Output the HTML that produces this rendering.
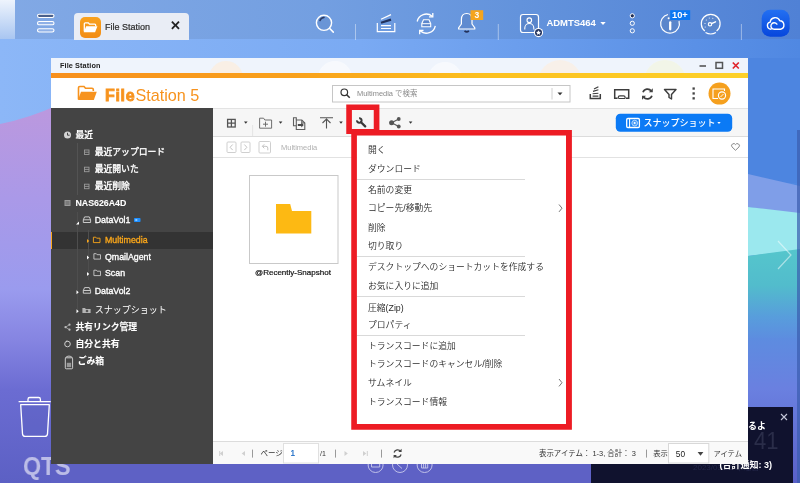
<!DOCTYPE html>
<html lang="ja"><head><meta charset="utf-8"><title>File Station</title>
<style>
*{box-sizing:border-box;margin:0;padding:0}
html,body{width:800px;height:483px;overflow:hidden}
body{position:relative;font-family:"Liberation Sans","Noto Sans CJK JP",sans-serif;background:#8ab6f7;color:#333}
.abs{position:absolute}
body>div{will-change:transform}
#desk{left:0;top:0;width:800px;height:483px}
#topbar{left:0;top:0;width:800px;height:39px;background:linear-gradient(90deg,#82a9e5 0%,#739fe1 40%,#6393dc 65%,#5081d5 100%)}
#topbar .lstrip{left:0;top:0;width:15px;height:39px;background:linear-gradient(180deg,#eef4fd,#a9c6f1)}
#tab{left:74px;top:13px;width:115px;height:27px;background:#e9edf5;border-radius:4px 4px 0 0}
#tab .ico{left:6px;top:4px;width:20.5px;height:20.5px;border-radius:5px;background:linear-gradient(180deg,#f9a21e,#f28c14)}
#tab .t{left:31px;top:7.7px;font-size:9px;color:#2c2c2c;-webkit-text-stroke:.2px #2c2c2c;white-space:nowrap;line-height:12px}
#tab .x{left:96px;top:5px;font-size:13px;font-weight:bold;color:#222;line-height:16px}
#win{left:51px;top:58px;width:697px;height:406px;background:#fff;overflow:hidden}
#titlebar{left:0;top:0;width:697px;height:15px;background:#eff4fc}
#titlebar .t{left:9px;top:3px;font-size:7.3px;font-weight:bold;color:#222;line-height:10px;white-space:nowrap;letter-spacing:.1px}
#stripe{left:0;top:15px;width:697px;height:5px;background:linear-gradient(90deg,#f7901e 0%,#f9a11b 35%,#fcc01e 62%,#fdd12a 100%)}
#header{left:0;top:20px;width:697px;height:31px;background:#fff}
#side{left:0;top:50px;width:162px;height:356px;background:#444}
#main{left:162px;top:50px;width:535px;height:356px;background:#fff}
#toolbar{left:0;top:0;width:535px;height:29px;background:#f6f6f6;border-top:1px solid #e3e3e3;border-bottom:1px solid #dcdcdc}
#navrow{left:0;top:29px;width:535px;height:21px;background:#fff;border-bottom:1px solid #e2e2e2}
#bottombar{left:0;top:333px;width:535px;height:23px;background:#f9f9f9;border-top:1px solid #dcdcdc}
.sb{position:absolute;white-space:nowrap;color:#fff;font-size:8.8px;line-height:12px;height:12px;-webkit-text-stroke:.33px currentColor}
.sb.b{font-weight:bold;-webkit-text-stroke:.1px currentColor}
#menu{left:357px;top:136px;width:210px;height:289px;background:#fff}
.mi{position:absolute;left:11px;white-space:nowrap;font-size:8.8px;line-height:12px;color:#2a2a2a;font-weight:350}
.sep{position:absolute;left:0;height:1px;width:168px;background:#d9d9d9}
.red{position:absolute;border:5.5px solid #ed1c24}
</style></head><body>
<div id="desk" class="abs">
<svg class="abs" style="left:0;top:0" width="800" height="483" viewBox="0 0 800 483">
<defs>
<linearGradient id="gb" x1="0" y1="0" x2="1" y2="0"><stop offset="0" stop-color="#8cb7f7"/><stop offset="0.45" stop-color="#7aaaf3"/><stop offset="1" stop-color="#5088e2"/></linearGradient>
<linearGradient id="gl" x1="0" y1="0" x2="0" y2="1"><stop offset="0" stop-color="#bc98de"/><stop offset="0.25" stop-color="#aa99e8"/><stop offset="0.49" stop-color="#9a9bee"/><stop offset="0.62" stop-color="#8685e2"/><stop offset="0.755" stop-color="#6b6cd2"/><stop offset="1" stop-color="#5c60c4"/></linearGradient>
<linearGradient id="gr" x1="0" y1="0" x2="0" y2="1"><stop offset="0" stop-color="#5d8ce0"/><stop offset="0.35" stop-color="#6a80e0"/><stop offset="1" stop-color="#5a60c8"/></linearGradient>
<linearGradient id="gt" x1="0" y1="0" x2="0" y2="1"><stop offset="0" stop-color="#55c6cc"/><stop offset="0.4" stop-color="#52bccc"/><stop offset="0.75" stop-color="#589ddc"/><stop offset="1" stop-color="#5d8ce0"/></linearGradient>
</defs>
<rect x="0" y="0" width="800" height="483" fill="url(#gb)"/>
<path d="M0 124 Q30 118 60 104 L60 483 L0 483Z" fill="url(#gl)"/>
<rect x="51" y="440" width="700" height="43" fill="#5e61c5"/>
<rect x="748" y="58" width="52" height="125" fill="#4d85e0"/>
<path d="M748 174 L800 186 L800 214 L748 207Z" fill="#7f9ee8"/>
<path d="M748 207 L800 213 L800 250 L748 256Z" fill="#9be8ee"/>
<path d="M748 256 L800 249 L800 340 L748 340Z" fill="url(#gt)"/>
<rect x="748" y="338" width="52" height="145" fill="url(#gr)"/>
<g fill="rgba(90,95,190,.35)" stroke="#fff" stroke-width="1.300" stroke-linejoin="round"><path d="M20.700 404.700h28.600l-1.800 29.200q-.2 2.500-2.700 2.500h-19.600q-2.500 0-2.700-2.500z"/><path d="M18.600 401.600h32.100M28 401.600v-2.300q0-1.800 1.800-1.800h8.800q1.800 0 1.800 1.800v2.300" fill="none"/></g>
<g fill="none" stroke="#fff" stroke-width="1" opacity=".6"><circle cx="375.600" cy="465" r="7.500"/><circle cx="400" cy="465" r="7.500"/><circle cx="424.600" cy="465" r="7.500"/><path d="M371.500 463.500v3.500h8.200v-3.500M397 464l5 4.500M421.500 464v4h6.200v-4M423.600 464v4M425.600 464v4"/></g>
<rect x="797" y="130" width="3" height="353" fill="#3a5cae" opacity=".7"/>
<path d="M778 241 L791 255 L778 269" fill="none" stroke="#fff" stroke-width="1.2" opacity=".5"/>
</svg>
</div>
<div class="abs" style="left:22.500px;top:451px;font-size:26px;line-height:30px;font-weight:bold;color:rgba(255,255,255,.58);white-space:nowrap;transform:scaleX(.9);transform-origin:0 0;letter-spacing:-.3px">QTS</div>
<div id="topbar" class="abs"><div class="lstrip abs"></div>
<svg class="abs" style="left:0;top:0" width="800" height="40" viewBox="0 0 800 40">
<defs><linearGradient id="gc" x1="0" y1="0" x2="0" y2="1"><stop offset="0" stop-color="#2370f2"/><stop offset="1" stop-color="#0646dc"/></linearGradient></defs>
<!-- hamburger -->
<g fill="none" stroke="#fff" stroke-width="1.100"><rect x="37.500" y="14.200" width="16.500" height="3.300" rx="1.650" fill="#4a5f8a"/><rect x="37.500" y="21.500" width="16.500" height="3.300" rx="1.650" fill="#8fb0e6"/><rect x="37.500" y="28.700" width="16.500" height="3.300" rx="1.650" fill="#8fb0e6"/></g>
<!-- search -->
<circle cx="324" cy="22.800" r="7.600" fill="#6a95d6" stroke="#fff" stroke-width="1.400"/><path d="M329.500 28.300l3.800 3.800" stroke="#fff" stroke-width="1.500" stroke-linecap="round"/><path d="M320 20.500a4.500 4.500 0 0 1 4-3" stroke="#2b3a63" stroke-width="1.500" fill="none" stroke-linecap="round"/>
<g stroke="#fff" stroke-width="1" opacity=".42"><path d="M355.500 24v16M498.300 24v16M741.400 24v16"/></g>
<!-- stack -->
<g fill="none" stroke="#fff" stroke-width="1.200"><path d="M377.300 23v8.600h17.500v-8.600"/><path d="M381 28.500h10M381 25.600h10M381 19.200l10-4.600"/></g><path d="M381 22.800l10-3.200" stroke="#22315a" stroke-width="2.200" fill="none"/>
<!-- sync -->
<g fill="none" stroke="#fff" stroke-width="1.300"><path d="M417.200 21.500a9.200 9.200 0 0 1 15-5.200"/><path d="M435.300 25.800a9.200 9.200 0 0 1-15 5.200"/><path d="M432.800 13v3.800h-3.800M419.700 34.300v-3.800h3.800"/></g>
<path d="M421.800 23.500l1.700-3.800h5.500l1.700 3.800v3.300h-8.900z" fill="#5c86cc" stroke="#fff" stroke-width="1.100"/><path d="M421.800 23.700h8.900" stroke="#fff" stroke-width="1"/>
<!-- bell -->
<path d="M466.700 13.500c-3.500 0-5.300 2.600-5.300 6v4.500l-2.800 3.800v1.200h16.200v-1.200l-2.800-3.800v-4.500c0-3.400-1.800-6-5.300-6z" fill="#5f8bd0" stroke="#fff" stroke-width="1.200" stroke-linejoin="round"/><path d="M464.500 30.800q2.200 2 4.400 0" stroke="#22315a" stroke-width="1.600" fill="none"/>
<rect x="470.500" y="10.200" width="12.700" height="9.800" fill="#f5a51e"/>
<!-- user -->
<rect x="520.500" y="14.500" width="18" height="18" rx="2.500" fill="#5a86cc" stroke="#fff" stroke-width="1.200"/>
<g fill="none" stroke="#fff" stroke-width="1.100"><circle cx="529.300" cy="20.200" r="2.300"/><path d="M524.800 29.500v-1.500a4.500 4.500 0 0 1 9 0v1.500"/></g>
<circle cx="538.500" cy="32.600" r="4.600" fill="#fff"/><circle cx="538.500" cy="32.600" r="3.500" fill="#243560"/><path d="M538.500 30.200l.75 1.600 1.700.2-1.250 1.150.35 1.700-1.550-.85-1.550.85.350-1.700-1.250-1.150 1.700-.2z" fill="#fff"/>
<path d="M600.300 22h5.400l-2.700 3z" fill="#fff"/>
<!-- three dots -->
<g stroke="#fff" stroke-width="1"><circle cx="632.300" cy="15.800" r="2.100" fill="#1f2c52"/><circle cx="632.300" cy="23.300" r="2.100" fill="#5f8bd0"/><circle cx="632.300" cy="30.800" r="2.100" fill="#5f8bd0"/></g>
<!-- info -->
<path d="M668 14.500a9.400 9.400 0 1 0 11 6.500" fill="#5a86cc" stroke="#fff" stroke-width="1.200"/>
<path d="M670.200 22.300v7" stroke="#fff" stroke-width="2.300" stroke-linecap="round"/><circle cx="668.600" cy="18.300" r="1" fill="#fff"/>
<rect x="670.200" y="10.200" width="20" height="9.800" fill="#0b78f2"/>
<!-- gauge -->
<path d="M704.800 31a9.400 9.400 0 1 1 11.800 0" fill="#5a86cc" stroke="#fff" stroke-width="1.200"/><path d="M705.500 32.500q5.200 3 10.400 0" fill="none" stroke="#fff" stroke-width="1.100"/>
<circle cx="710" cy="24.300" r="1.700" fill="none" stroke="#fff" stroke-width="1.100"/><path d="M711.500 23.600l4-1.800" stroke="#fff" stroke-width="1.400" stroke-linecap="round"/>
<g fill="#fff"><circle cx="705" cy="23.500" r=".55"/><circle cx="706.300" cy="20" r=".55"/><circle cx="709.300" cy="18" r=".55"/><circle cx="712.800" cy="18.200" r=".55"/><circle cx="705.200" cy="27" r=".55"/></g>
<!-- cloud -->
<rect x="761.700" y="9.800" width="27.900" height="27" rx="8.500" fill="url(#gc)"/>
<path d="M771 29.200a3.600 3.600 0 0 1-.8-7.100a5 5 0 0 1 9.600-1.300a4.300 4.300 0 0 1 .7 8.500h-6.300a3.300 3.300 0 1 1 2.700-5.200" fill="none" stroke="#fff" stroke-width="1.400" stroke-linecap="round" stroke-linejoin="round"/>
</svg>
<div class="abs" style="left:546.500px;top:17px;font-size:9.500px;line-height:12px;font-weight:bold;color:#fff;white-space:nowrap;letter-spacing:-.05px">ADMTS464</div>
<div class="abs" style="left:474.500px;top:9.600px;font-size:8.500px;line-height:11px;font-weight:bold;color:#fff">3</div>
<div class="abs" style="left:672px;top:9.600px;font-size:9.300px;line-height:11px;font-weight:bold;color:#fff;white-space:nowrap">10+</div>
</div>
<div id="tab" class="abs"><div class="ico abs"><svg width="20.5" height="20.5" viewBox="0 0 20.5 20.5" style="display:block"><path d="M4.300 14.500V6.800q0-1 1-1h3l1.200 1.400h5.200q1 0 1 1v1" fill="none" stroke="#fff" stroke-width="1.300"/><path d="M3.800 15.200l2.300-6h11.300l-2.300 6z" fill="#fff"/></svg></div><div class="t abs">File Station</div><div class="x abs">✕</div></div>

<div id="notif" class="abs" style="left:590.500px;top:406.600px;width:202.400px;height:77px;background:#10122e;overflow:hidden">
<div class="abs" style="left:148px;top:12.500px;font-size:9px;line-height:12px;font-weight:bold;color:#fff;white-space:nowrap">いるよ</div>
<div class="abs" style="left:162.500px;top:19.500px;font-size:24.500px;line-height:28px;color:#2a2d49;white-space:nowrap;transform:scaleX(.9);transform-origin:0 0">41</div>
<div class="abs" style="left:102px;top:55px;font-size:8px;line-height:12px;color:#24274a;white-space:nowrap">2023/03/16 木曜日</div>
<div class="abs" style="left:128.500px;top:51.500px;font-size:9px;line-height:12px;font-weight:bold;color:#fff;white-space:nowrap">(合計通知: 3)</div>
<svg class="abs" style="left:189px;top:6px" width="8" height="8" viewBox="0 0 8 8"><path d="M1 1l6 6M7 1l-6 6" stroke="#c4c6d8" stroke-width="1.100"/></svg>
</div>

<div id="win" class="abs">
 <div id="titlebar" class="abs"><div class="t abs">File Station</div>
<svg class="abs" style="left:0;top:0" width="697" height="15" viewBox="51 58 697 15">
<g opacity=".65"><circle cx="226" cy="78" r="17" fill="#fdecd8"/><circle cx="335" cy="78" r="17" fill="#fcfdff"/><circle cx="445" cy="79" r="17" fill="#fcfdff"/><circle cx="560" cy="82" r="22" fill="#fdefe0"/><circle cx="665" cy="81" r="21" fill="#f5f7de"/></g>
<path d="M699.500 66h6.500" stroke="#555" stroke-width="1.600"/>
<rect x="716" y="62.500" width="6.500" height="5.800" fill="none" stroke="#555" stroke-width="1.500"/>
<path d="M732.800 62.500l6 6M738.800 62.500l-6 6" stroke="#e0242b" stroke-width="1.700"/>
</svg></div>
 <div id="stripe" class="abs"></div>
 <div id="header" class="abs">
<svg class="abs" style="left:0;top:0" width="697" height="31" viewBox="51 78 697 31">
<!-- logo folder -->
<path d="M78.500 99.500V87.800q0-1.300 1.300-1.300h4.200l1.500 1.800h6.500q1.300 0 1.300 1.300v1.400" fill="none" stroke="#f7931e" stroke-width="1.600"/>
<path d="M78 99.900l3-8.200h15.800l-3 8.200z" fill="#f7931e"/>
<!-- search -->
<rect x="332.500" y="85.500" width="237.500" height="16.500" fill="#fff" stroke="#c6c6c6" stroke-width="1"/>
<circle cx="344.300" cy="92.300" r="3.300" fill="none" stroke="#333" stroke-width="1.200"/><path d="M346.700 94.800l3 3" stroke="#333" stroke-width="1.500"/>
<path d="M552 88v11.500" stroke="#d0d0d0" stroke-width="1"/>
<path d="M557.500 92.500h5l-2.500 2.800z" fill="#333"/>
<!-- stack icon -->
<g fill="none" stroke="#3d3d3d"><path d="M590.300 94v4.500h10v-4.500" stroke-width="1.500"/><path d="M592.600 96.100h5.800M592.600 93.700l5.800-.5M593 91.400l5.400-1.600M594 89.100l4.400-2.300" stroke-width="1.150"/></g>
<!-- device icon -->
<g fill="none" stroke="#3d3d3d" stroke-width="1.500"><path d="M617.500 98.300h-2.800v-8.600h14v8.600h-2.800"/><path d="M618.300 98.600v-1.300q0-1.500 1.500-1.500h3.800q1.500 0 1.500 1.500v1.300" stroke-width="1.200"/><path d="M618.500 98.500h6.500" stroke-width="1"/></g>
<!-- refresh -->
<g fill="none" stroke="#3d3d3d" stroke-width="1.700"><path d="M643 92.300a4.700 4.700 0 0 1 8.300-1.200"/><path d="M651.900 95.700a4.700 4.700 0 0 1-8.300 1.200"/></g>
<path d="M652.800 88.200v4h-4z M642 99.800v-4h4z" fill="#444"/>
<!-- funnel -->
<path d="M664.500 89.500h11.500l-4.500 5v4.500l-2.500-1.500v-3z" fill="none" stroke="#3d3d3d" stroke-width="1.450" stroke-linejoin="round"/>
<!-- kebab -->
<g fill="#444"><rect x="692.500" y="87.400" width="2.300" height="2.300"/><rect x="692.500" y="92.300" width="2.300" height="2.300"/><rect x="692.500" y="97.200" width="2.300" height="2.300"/></g>
<!-- orange circle -->
<circle cx="719.500" cy="93.600" r="11" fill="#f5a01e"/>
<g fill="none" stroke="#fff" stroke-width="1.100"><path d="M718 98.500h-5v-9.500h11.500v2"/><circle cx="722" cy="95.500" r="3.600"/><path d="M720.500 97l3-3" stroke-width=".9"/></g>
</svg>
<div class="abs" style="left:54px;top:6.500px;font-size:16.200px;line-height:20px;color:#f7931e;white-space:nowrap"><b style="font-size:16px;letter-spacing:.7px;-webkit-text-stroke:.8px #f7931e">File</b>Station 5</div>
<div class="abs" style="left:306px;top:10.500px;font-size:7.450px;line-height:10px;color:#8a8a8a;white-space:nowrap">Multimedia で検索</div>
</div>
 <div id="side" class="abs">
<div class="abs" style="left:0;top:124px;width:162px;height:16.5px;background:#333;border-left:1.5px solid #f9a61a"></div>
<div class="abs" style="left:26px;top:35px;width:1px;height:52px;background:#535353"></div>
<div class="abs" style="left:26px;top:104px;width:1px;height:100px;background:#4e4e4e"></div>
<div class="abs" style="left:37px;top:122px;width:1px;height:50px;background:#4e4e4e"></div>
<div class="sb b" style="left:24.5px;top:21px;color:#fff">最近</div>
<div class="sb" style="left:43.7px;top:38px;color:#fff">最近アップロード</div>
<div class="sb" style="left:43.7px;top:55.4px;color:#fff">最近開いた</div>
<div class="sb" style="left:43.7px;top:72.4px;color:#fff">最近削除</div>
<div class="sb b" style="left:24.5px;top:89px;color:#fff">NAS626A4D</div>
<div class="sb" style="left:43.7px;top:106px;color:#fff">DataVol1</div>
<div class="sb" style="left:54px;top:126px;color:#f9a61a">Multimedia</div>
<div class="sb" style="left:54px;top:142.5px;color:#fff">QmailAgent</div>
<div class="sb" style="left:54px;top:159px;color:#fff">Scan</div>
<div class="sb" style="left:43.7px;top:176.7px;color:#fff">DataVol2</div>
<div class="sb" style="left:43.7px;top:195.8px;color:#fff;-webkit-text-stroke:0;font-size:9px">スナップショット</div>
<div class="sb b" style="left:24.5px;top:213.2px;color:#fff">共有リンク管理</div>
<div class="sb b" style="left:24.5px;top:229.8px;color:#fff">自分と共有</div>
<div class="sb b" style="left:26.7px;top:246.8px;color:#fff">ごみ箱</div>
<svg class="abs" style="left:0;top:0" width="162" height="356" viewBox="0 0 162 356">
<circle cx="16.5" cy="27" r="3.5" fill="#d4d4d4"/><path d="M16.5 24.8V27.2H18.6" stroke="#444" stroke-width="1" fill="none"/>
<g fill="none" stroke="#9a9a9a" stroke-width="0.9"><rect x="33.5" y="42" width="4.5" height="4.5"/><path d="M33.5 44.2h4.5"/><rect x="33.5" y="59.2" width="4.5" height="4.5"/><path d="M33.5 61.4h4.5"/><rect x="33.5" y="76.2" width="4.5" height="4.5"/><path d="M33.5 78.4h4.5"/></g>
<rect x="13.5" y="92" width="6" height="6" fill="#9a9a9a"/><path d="M14.5 94h4M14.5 96h4" stroke="#444" stroke-width=".7"/>
<path d="M28 113.5v3h-3z" fill="#fff"/>
<path d="M32.300 111.800L33.600 108.900H38.300L39.600 111.800V114.500H32.300ZM32.300 111.800H39.600" fill="none" stroke="#d8d8d8" stroke-width=".9"/>
<rect x="83" y="110" width="6.5" height="4" rx=".8" fill="#1e8fff"/><rect x="84.3" y="111" width="2" height="2" fill="#8cc8ff"/>
<path d="M36 131l2.2 2-2.2 2z" fill="#f9a61a"/>
<path d="M42.400 134.600V129.200h2.400l.8 1H49V134.600Z" fill="none" stroke="#f9a61a" stroke-width=".9"/>
<path d="M36 147.500l2.200 2-2.200 2z" fill="#fff"/>
<path d="M42.900 151.100V145.700h2.400l.8 1H49.500V151.100Z" fill="none" stroke="#c8c8c8" stroke-width=".9"/>
<path d="M36 164l2.200 2-2.200 2z" fill="#fff"/>
<path d="M42.900 167.600V162.200h2.400l.8 1H49.500V167.600Z" fill="none" stroke="#c8c8c8" stroke-width=".9"/>
<path d="M25.500 182.200l2.200 2-2.200 2z" fill="#fff"/>
<path d="M32.300 182.500L33.600 179.600H38.300L39.600 182.500V185.200H32.300ZM32.300 182.500H39.600" fill="none" stroke="#d8d8d8" stroke-width=".9"/>
<path d="M25.500 201.300l2.200 2-2.200 2z" fill="#fff"/>
<path d="M31.400 205V200h2.600l.8 1H39.600V205Z" fill="#b4b4b4"/><circle cx="36" cy="203" r="1.300" fill="#555"/>
<g fill="#bbb"><circle cx="18.500" cy="216.700" r="1.100"/><circle cx="14.500" cy="219.200" r="1.100"/><circle cx="18.500" cy="221.700" r="1.100"/></g><path d="M18.500 216.700l-4 2.500 4 2.500" fill="none" stroke="#bbb" stroke-width=".7"/>
<circle cx="16.500" cy="236" r="2.800" fill="none" stroke="#ccc" stroke-width="1"/><path d="M15 232.500l2 .5-1.500 1.500z" fill="#ccc"/>
<g transform="translate(.8,1.300)"><g fill="none" stroke="#ddd" stroke-width="0.9"><rect x="13.500" y="248.500" width="7.300" height="11" rx="1"/><path d="M13.500 248.500q3.650-3.500 7.300 0"/></g><rect x="15" y="253.500" width="4.300" height="4.300" fill="#999"/></g>
</svg>
</div>
 <div id="main" class="abs">
  <div id="toolbar" class="abs"></div>
  <div id="navrow" class="abs"></div>
  <div id="bottombar" class="abs"></div>
<svg class="abs" style="left:0;top:0" width="535" height="356" viewBox="213 108 535 356">
<!-- toolbar icons -->
<g fill="none" stroke="#555" stroke-width="1.300"><rect x="227.600" y="119.400" width="7.600" height="7.600"/><path d="M231.400 119.400v7.600M227.600 123.200h7.600"/></g>
<g fill="#333"><path d="M244 121.500h3.600l-1.800 2.200z"/><path d="M278.800 121.500h3.600l-1.800 2.200z"/><path d="M339.200 121.500h3.600l-1.800 2.200z"/><path d="M408.800 121.500h3.600l-1.800 2.200z"/></g>
<path d="M252.600 125v11" stroke="#e4e4e4" stroke-width="1"/>
<g fill="none" stroke="#686868" stroke-width=".95"><path d="M259.600 128.200v-10h4l1.200 1.800h6.800v8.200z"/><path d="M265.500 121.700v5M263 124.200h5"/></g>
<g transform="translate(.3,.5)"><g fill="none" stroke="#5e5e5e" stroke-width="1.100"><path d="M296 119.500v-2.300h-2.800v8h2.800"/><path d="M296 119.500h5.500l3 3v6.500h-8.500z"/><path d="M301.500 119.500v3h3"/></g><path d="M297.500 123.500h3.500v-1.500l2.500 2.500-2.500 2.500v-1.500h-3.500z" fill="#4a4a4a"/></g>
<g fill="none" stroke="#555" stroke-width="1.100"><path d="M320 117.800h13M326.500 128.500v-9.500M322.500 123l4-4 4 4"/></g>
<!-- wrench -->
<g fill="none" stroke="#3a3a3a"><path d="M359.1 118.2A2.300 2.300 0 1 1 357 120.300" stroke-width="2"/><path d="M361 122.200l4.200 4.200" stroke-width="2.300" stroke-linecap="round"/></g>
<!-- share -->
<g fill="#555"><circle cx="398.750" cy="119" r="1.900"/><circle cx="391.600" cy="122.750" r="2.500"/><circle cx="398.750" cy="126.500" r="1.900"/></g><path d="M398.750 119l-7.150 3.750 7.150 3.750" fill="none" stroke="#555" stroke-width="1.100"/>
<!-- snapshot btn -->
<rect x="615.800" y="113.800" width="116.400" height="18" rx="4.500" fill="#0b7af5"/>
<g fill="none" stroke="#fff" stroke-width="1.300"><rect x="626.700" y="118.500" width="12.700" height="9" rx="1.200"/><path d="M629.600 118.500v9" stroke-width="1.100"/></g><circle cx="634.700" cy="123.100" r="2.900" fill="#4d9ff8" stroke="#cfe4fd" stroke-width=".8"/><circle cx="634.700" cy="123.100" r="1" fill="#fff"/>
<path d="M717.300 122h3.400l-1.700 2z" fill="#fff"/>
<!-- nav row -->
<g fill="none" stroke="#cfcfcf" stroke-width="1"><rect x="227" y="142" width="9" height="10.500" rx="1"/><rect x="241" y="142" width="9" height="10.500" rx="1"/><rect x="259" y="141.500" width="11.500" height="11.500" rx="1"/></g>
<g fill="none" stroke="#c4c4c4" stroke-width="1"><path d="M232.700 144.500l-2.600 2.800 2.600 2.800M244.300 144.500l2.600 2.800-2.600 2.800"/><path d="M264.300 144.300l-2 2 2 2M262.500 146.300h3.500q1.800 0 1.800 1.800v2.200"/></g>
<path d="M735.500 150.300l-3.600-3.500a2.100 2.100 0 0 1 3.600-2.200a2.100 2.100 0 0 1 3.600 2.200z" fill="none" stroke="#888" stroke-width="1"/>
<!-- thumbnail -->
<rect x="249.500" y="175.500" width="88.500" height="88" fill="#fff" stroke="#c9c9c9" stroke-width="1"/>
<path d="M276 204h14.200l1.800 7h19.300v22.600h-35.300z" fill="#fdb913"/>
<!-- bottom bar -->
<g transform="translate(0,4.6)"><g fill="#d0d0d0"><path d="M223 446.500l-3.300 2.500 3.300 2.500zM219.200 446.500h1v5h-1z"/><path d="M245 446.500l-3.300 2.500 3.300 2.500z"/><path d="M344.500 446.500l3.300 2.500-3.300 2.500z"/><path d="M363 446.500l3.300 2.500-3.300 2.500zM366.800 446.500h1v5h-1z"/></g>
<g stroke="#9a9a9a" stroke-width="1"><path d="M252.500 445v8M335.500 445v8M381.500 445v8"/><path d="M646.500 445v8" /></g>
</g>
<rect x="283.500" y="443.500" width="35" height="19.500" fill="#fff" stroke="#e0e0e0" stroke-width="1"/>
<rect x="668.500" y="443.500" width="40.300" height="19.500" fill="#fff" stroke="#d8d8d8" stroke-width="1"/>
<path d="M697.600 452.100h5.800l-2.900 3.600z" fill="#444"/>
<g transform="translate(-0.4,1.2)"><g fill="none" stroke="#444" stroke-width="1.300"><path d="M394.500 451.300a3.700 3.700 0 0 1 6.600-1.100"/><path d="M401.500 453.300a3.700 3.700 0 0 1-6.600 1.100"/></g><path d="M402 447.500v3.300h-3.300z M394 457v-3.300h3.300z" fill="#444"/>
</g>
</svg>
<div class="abs" style="left:430.500px;top:9px;font-size:9px;line-height:12px;color:#fff;white-space:nowrap;font-weight:500">スナップショット</div>
<div class="abs" style="left:68px;top:33.500px;font-size:7.500px;line-height:11px;color:#b0b0b0;white-space:nowrap">Multimedia</div>
<div class="abs" style="left:42px;top:160px;font-size:8.030px;line-height:10px;color:#111;white-space:nowrap;-webkit-text-stroke:.2px #111">@Recently-Snapshot</div>
<div class="abs" style="left:47.500px;top:339.500px;font-size:7.500px;line-height:11px;color:#333;white-space:nowrap">ページ</div>
<div class="abs" style="left:77.500px;top:340px;font-size:8.300px;line-height:11px;color:#1668c4;white-space:nowrap;-webkit-text-stroke:.2px #1668c4">1</div>
<div class="abs" style="left:107px;top:340px;font-size:7px;line-height:11px;color:#333;white-space:nowrap">/1</div>
<div class="abs" style="left:326px;top:339.500px;font-size:7.450px;line-height:11px;color:#333;white-space:nowrap">表示アイテム： 1-3, 合計： 3</div>
<div class="abs" style="left:440.200px;top:339.500px;font-size:7.300px;line-height:11px;color:#333;white-space:nowrap">表示</div>
<div class="abs" style="left:462.800px;top:340.500px;font-size:8.300px;line-height:11px;color:#222;white-space:nowrap">50</div>
<div class="abs" style="left:500.500px;top:339.500px;font-size:7.300px;line-height:11px;color:#333;white-space:nowrap">アイテム</div>

 </div>
</div>

<div id="menu" class="abs">
<div class="mi" style="top:7.5px">開く</div>
<div class="mi" style="top:26.8px">ダウンロード</div>
<div class="mi" style="top:48.4px">名前の変更</div>
<div class="mi" style="top:66.2px">コピー先/移動先</div>
<div class="mi" style="top:86.3px">削除</div>
<div class="mi" style="top:104.4px">切り取り</div>
<div class="mi" style="top:125.3px">デスクトップへのショートカットを作成する</div>
<div class="mi" style="top:144.0px">お気に入りに追加</div>
<div class="mi" style="top:165.5px">圧縮(Zip)</div>
<div class="mi" style="top:183.3px">プロパティ</div>
<div class="mi" style="top:203.5px">トランスコードに追加</div>
<div class="mi" style="top:222.4px">トランスコードのキャンセル/削除</div>
<div class="mi" style="top:240.8px">サムネイル</div>
<div class="mi" style="top:260.0px">トランスコード情報</div>
<div class="sep" style="top:43.0px"></div>
<div class="sep" style="top:119.5px"></div>
<div class="sep" style="top:159.5px"></div>
<div class="sep" style="top:198.9px"></div>
<svg class="abs" style="left:0;top:0" width="210" height="289" viewBox="357 136 210 289"><g fill="none" stroke="#777" stroke-width="1"><path d="M559 204.500l3 3.700-3 3.700M559 379l3 3.700-3 3.700"/></g></svg></div>
<svg class="abs" style="left:0;top:0;will-change:transform" width="800" height="483" viewBox="0 0 800 483"><g fill="#ed1c24" fill-rule="evenodd"><path d="M346.250 104.400H379.400V134H346.250ZM351.900 110V128.900H373.750V110Z"/><path d="M351.250 130H571.900V429.750H351.250ZM356.900 135.600V424H566V135.600Z"/></g></svg>
</body></html>
